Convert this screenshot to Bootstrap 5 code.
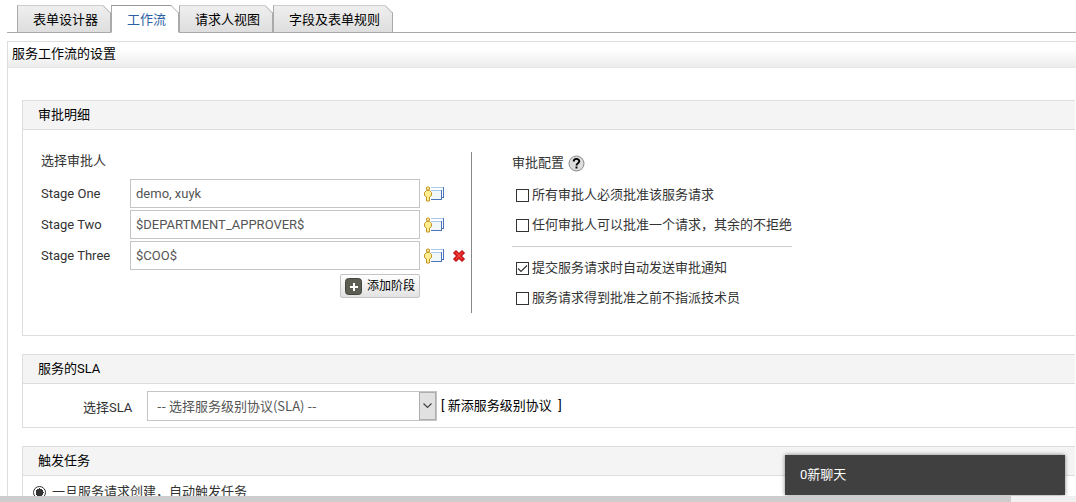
<!DOCTYPE html>
<html lang="zh-CN">
<head>
<meta charset="utf-8">
<meta name="viewport" content="width=device-width, initial-scale=1">
<title>服务工作流的设置</title>
<link href="https://cdn.jsdelivr.net/npm/bootstrap@5.3.0/dist/css/bootstrap.min.css" rel="stylesheet">
<style>
  body { font: 13px/20px Roboto, "Noto Sans CJK SC", sans-serif; color: #333; background: #fff; }
  .view-area { min-height: 0; }

  /* Tabs */
  .tab-strip { padding: 5px 0 0 17px; }
  .tab-strip::before, .tab-strip::after { content: ""; height: 1px; background: #aaa; align-self: flex-end; }
  .tab-strip::before { width: 10px; margin-left: -10px; }
  .tab-strip::after { flex: 1; }
  .tab-strip .nav-link { position: relative; height: 28px; padding: 4px 12px 0 15px; color: #000; border: 1px solid #aaa; border-top-color: #ccc; border-radius: 0; background: linear-gradient(#efefef, #dedede); }
  .tab-strip .nav-link.active { color: #2a5fa5; background: #fff; border-color: #999 #aaa #fff; }
  .tab-corner { position: absolute; top: -1px; right: -1px; width: 8px; height: 8px; }

  /* Panels */
  .main-panel { margin: 8px 0 0 7px; border: 1px solid #ddd; border-right: 0; border-bottom: 0; min-height: 0; }
  .main-title { height: 26px; padding: 2px 4px; font-size: 13px; line-height: 20px; color: #000; background: linear-gradient(#fff 30%, #ececec); border-bottom: 1px solid #e6e6e6; }
  .panel-stack { padding: 32px 1px 0 14px; gap: 18px; }
  .panel-box { border: 1px solid #ddd; border-right: 0; }
  .panel-name { height: 29px; padding: 4px 15px; font-size: 13px; line-height: 20px; color: #000; background: #f4f4f4; border-bottom: 1px solid #ddd; }

  /* Approval details */
  .approval { padding: 22px 18px; }
  .approvers { width: 431px; border-right: 1px solid #888; }
  .approvers-title { margin: -1px 0 8px; }
  .stage-list { gap: 2px; }
  .stage-label { width: 89px; }
  .stage-input { width: 290px; height: 29px; padding: 0 5px; border: 1px solid #c4c4c4; border-radius: 0; font: inherit; color: #555; }
  .icon-btn { padding: 0; border: 0; background: none; line-height: 0; }
  .add-btn { height: 24px; padding: 0 4px; gap: 5px; color: #000; border: 1px solid #c4c4c4; border-radius: 2px; background: linear-gradient(#fff, #e2e2e2); line-height: 20px; font-size: 12px; }
  .add-area { width: 379px; padding-top: 4px; }
  .config { width: 280px; margin-left: 40px; padding-top: 1px; }
  .config-group { padding: 12px 0 11px 4px; gap: 10px; }
  .config-group + .config-group { border-top: 1px solid #ccc; padding: 11px 0 5px 4px; }
  .tick-row { gap: 3px; }
  .tick { appearance: none; flex: none; width: 13px; height: 13px; margin: 0; border: 1px solid #333; background: #fff center / 11px 11px no-repeat; }
  .tick:checked { background-image: url("data:image/svg+xml,%3Csvg xmlns='http://www.w3.org/2000/svg' viewBox='0 0 11 11'%3E%3Cpath d='M1 5.5 4 8.5 10 2.5' fill='none' stroke='%23333' stroke-width='1.2'/%3E%3C/svg%3E"); }

  /* SLA */
  .sla { padding: 7px 0 6px 60px; }
  .sla-label { padding-top: 3px; width: 64px; }
  .sla-select { width: 290px; height: 30px; padding: 0 9px; border: 1px solid #c4c4c4; color: #555; font: 13px/20px "Noto Sans CJK SC", sans-serif; background: #fff; appearance: none; border-radius: 0; }
  .sla-arrow { position: absolute; top: 1px; right: 1px; width: 17px; height: 28px; border: 1px solid #adadad; background: #e1e1e1; pointer-events: none; }

  /* Tasks */
  .task-row { padding: 6px 10px 20px; }
  .task-option { gap: 6px; }
  .dot { appearance: none; width: 13px; height: 13px; margin: 0; border: 1px solid #333; border-radius: 50%; background: radial-gradient(circle, #333 0 4px, #fff 4px); }

  .chat-bar { position: absolute; right: 11px; bottom: 1px; width: 280px; height: 40px; padding: 0 15px; border: 0; background: #404040; color: #fff; box-shadow: 0 0 4px rgba(0,0,0,.5); }
  .scroll-track { flex: none; height: 6px; background: #f0f0f0; }
  .scroll-thumb { width: 94%; background: #cdcdcd; }
</style>
</head>
<body class="vh-100 d-flex flex-column overflow-hidden">
<svg class="d-none">
  <symbol id="person" viewBox="0 0 21 16">
    <g shape-rendering="crispEdges">
      <path d="M7 1h13v11H7z" fill="#fff"/>
      <path d="M7 1h12v1H7z" fill="#a9c9ee"/>
      <path d="M19 1h1v11h-2v-1h1z" fill="#4a74bd"/>
      <path d="M7 4h10v9H7z" fill="#f1f6f7"/>
      <path d="M7 4h10v1H7z" fill="#a9c9ee"/>
      <path d="M17 4h1v10H7v-1h10z" fill="#4a74bd"/>
    </g>
    <path d="M2.500 4.500h3l2 2v3l-2 1.500v4h-3v-4l-2-1.500v-3z" fill="#ffee90" stroke="#c0932b"/>
    <path d="M2.500 1.500 4 .8l1.500.7v2L4 4.200l-1.500-.7z" fill="#ffee90" stroke="#c0932b"/>
  </symbol>
  <symbol id="corner" viewBox="0 0 8 8">
    <path d="M0 0h8v8z" fill="#fff"/><path d="M0 .5 7.500 8" fill="none" stroke="#aaa"/>
  </symbol>
</svg>

<main class="view-area position-relative flex-grow-1 d-flex flex-column overflow-hidden">
  <ul class="nav tab-strip flex-nowrap">
    <li class="nav-item"><a class="nav-link" href="#">表单设计器<svg class="tab-corner"><use href="#corner"/></svg></a></li>
    <li class="nav-item"><a class="nav-link active" href="#" aria-current="page">工作流<svg class="tab-corner"><use href="#corner"/></svg></a></li>
    <li class="nav-item"><a class="nav-link" href="#">请求人视图<svg class="tab-corner"><use href="#corner"/></svg></a></li>
    <li class="nav-item"><a class="nav-link" href="#">字段及表单规则<svg class="tab-corner"><use href="#corner"/></svg></a></li>
  </ul>

  <div class="main-panel flex-grow-1">
    <h1 class="main-title mb-0 fw-normal">服务工作流的设置</h1>
    <div class="panel-stack d-flex flex-column">

      <section class="panel-box">
        <h2 class="panel-name mb-0 fw-normal">审批明细</h2>
        <div class="approval d-flex">
          <div class="approvers">
            <div class="approvers-title">选择审批人</div>
            <div class="stage-list d-flex flex-column">
              <div class="d-flex align-items-center">
                <label class="stage-label" for="s1">Stage One</label>
                <input class="stage-input" id="s1" type="text" value="demo, xuyk">
                <button class="icon-btn ms-1" type="button" aria-label="选择"><svg width="21" height="16"><use href="#person"/></svg></button>
              </div>
              <div class="d-flex align-items-center">
                <label class="stage-label" for="s2">Stage Two</label>
                <input class="stage-input" id="s2" type="text" value="$DEPARTMENT_APPROVER$">
                <button class="icon-btn ms-1" type="button" aria-label="选择"><svg width="21" height="16"><use href="#person"/></svg></button>
              </div>
              <div class="d-flex align-items-center">
                <label class="stage-label" for="s3">Stage Three</label>
                <input class="stage-input" id="s3" type="text" value="$COO$">
                <button class="icon-btn ms-1" type="button" aria-label="选择"><svg width="21" height="16"><use href="#person"/></svg></button>
                <button class="icon-btn ms-2" type="button" aria-label="删除"><svg width="12" height="12" viewBox="0 0 12 12"><path d="M3 .5 6 3.500 9 .5l2.500 2.500-3 3 3 3L9 11.500l-3-3-3 3L.5 9l3-3-3-3z" fill="#e01b1b" stroke="#a80000"/><path d="M3 2.500 9 9M9 2.500 3 9" stroke="#f25a50"/></svg></button>
              </div>
            </div>
            <div class="add-area d-flex justify-content-end">
              <button class="add-btn d-flex align-items-center text-nowrap" type="button">
                <svg width="17" height="17" viewBox="0 0 17 17"><rect x=".5" y=".5" width="16" height="16" rx="3" fill="#5d5e53" stroke="#45463d"/><path d="M9 5v8M5 9h8" stroke="#fff" stroke-width="2"/></svg>
                添加阶段
              </button>
            </div>
          </div>

          <div class="config">
            <div class="d-flex align-items-center gap-1">
              <span>审批配置</span>
              <button class="icon-btn" type="button" aria-label="帮助"><svg width="17" height="17" viewBox="0 0 17 17"><circle cx="8.500" cy="8.500" r="7.500" fill="#ddd" stroke="#888"/><path d="M5.700 6.600C5.700 3 11.300 3 11.300 6.300 11.300 8.200 8.500 8.200 8.500 10.400M8.500 11.500v2" fill="none" stroke="#000" stroke-width="1.900"/></svg></button>
            </div>
            <div class="config-group d-flex flex-column">
              <label class="tick-row d-flex align-items-center text-nowrap"><input class="tick" type="checkbox">所有审批人必须批准该服务请求</label>
              <label class="tick-row d-flex align-items-center text-nowrap"><input class="tick" type="checkbox">任何审批人可以批准一个请求，其余的不拒绝</label>
            </div>
            <div class="config-group d-flex flex-column">
              <label class="tick-row d-flex align-items-center text-nowrap"><input class="tick" type="checkbox" checked>提交服务请求时自动发送审批通知</label>
              <label class="tick-row d-flex align-items-center text-nowrap"><input class="tick" type="checkbox">服务请求得到批准之前不指派技术员</label>
            </div>
          </div>
        </div>
      </section>

      <section class="panel-box">
        <h2 class="panel-name mb-0 fw-normal">服务的SLA</h2>
        <div class="sla d-flex align-items-center">
          <label class="sla-label" for="sla">选择SLA</label>
          <div class="position-relative">
            <select class="sla-select d-block" id="sla"><option>-- 选择服务级别协议(SLA) --</option></select>
            <span class="sla-arrow d-flex align-items-center justify-content-center"><svg width="9" height="6" viewBox="0 0 9 6"><path d="M.5.5l4 4 4-4" fill="none" stroke="#444" stroke-width="1.200"/></svg></span>
          </div>
          <span class="ms-1 text-black">[ <a class="text-black text-decoration-none" href="#">新添服务级别协议</a>&nbsp; ]</span>
        </div>
      </section>

      <section class="panel-box">
        <h2 class="panel-name mb-0 fw-normal">触发任务</h2>
        <div class="task-row">
          <label class="task-option d-flex align-items-center"><input class="dot" type="radio" checked>一旦服务请求创建，自动触发任务</label>
        </div>
      </section>
    </div>
  </div>

  <button class="chat-bar text-start" type="button">0新聊天</button>
</main>
<div class="scroll-track d-flex"><div class="scroll-thumb"></div></div>
<script src="https://cdn.jsdelivr.net/npm/bootstrap@5.3.0/dist/js/bootstrap.bundle.min.js"></script>
</body>
</html>
